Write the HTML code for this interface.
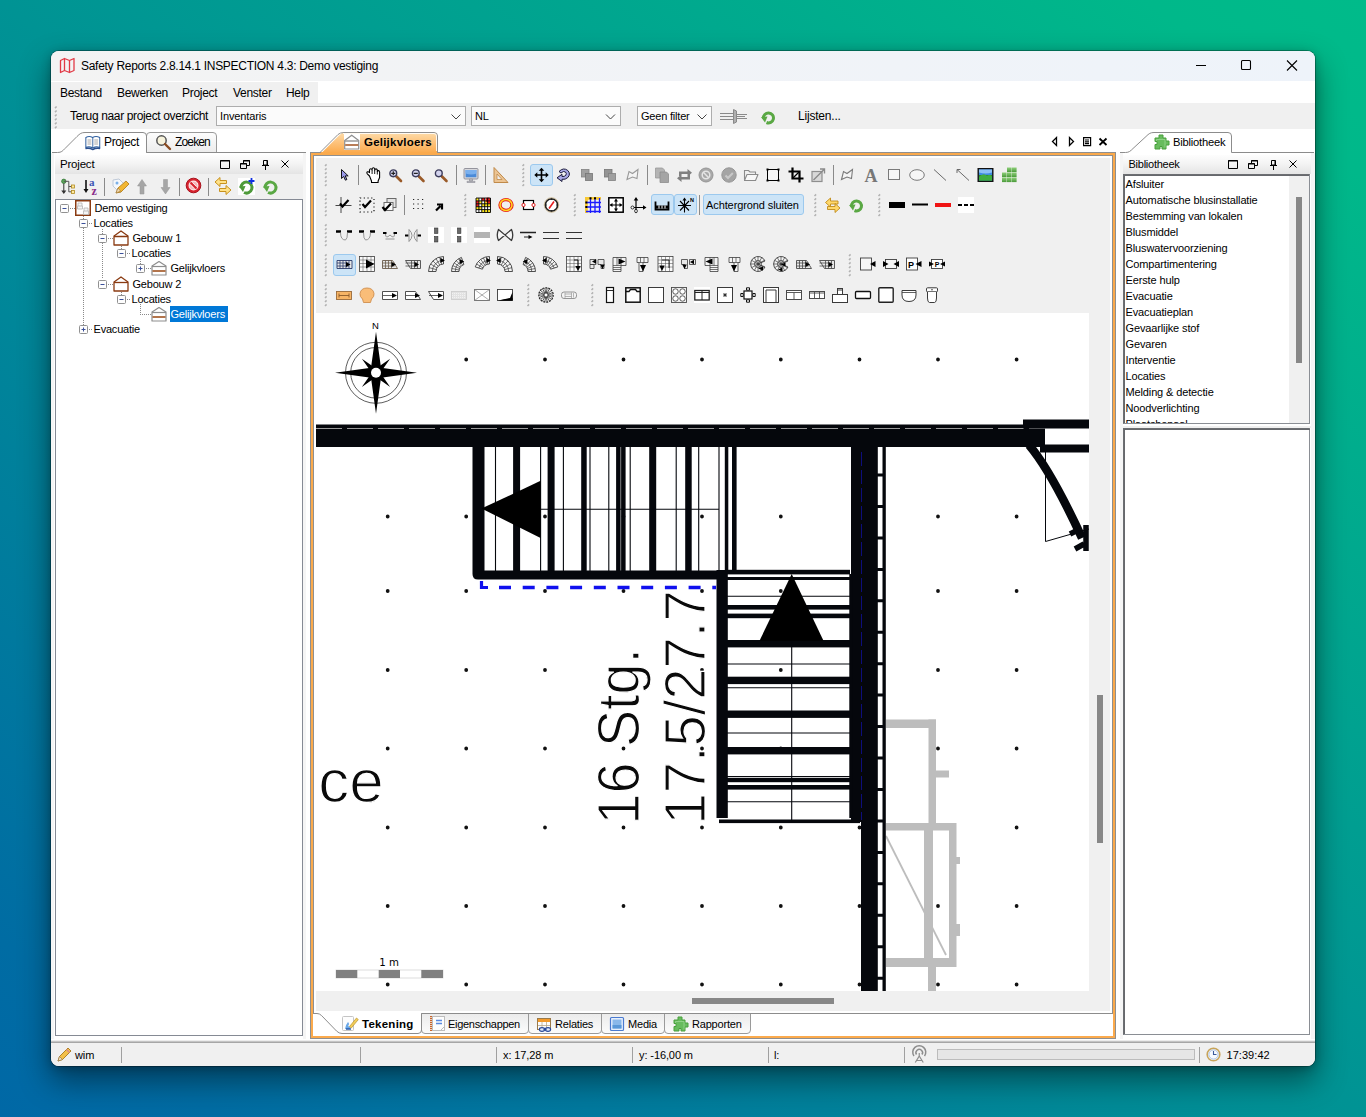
<!DOCTYPE html>
<html lang="nl">
<head>
<meta charset="utf-8">
<title>Safety Reports 2.8.14.1 INSPECTION 4.3: Demo vestiging</title>
<style>
*{box-sizing:border-box;margin:0;padding:0}
html,body{width:1366px;height:1117px;overflow:hidden}
body{position:relative;font-family:"Liberation Sans",sans-serif;font-size:11px;color:#000;
 background:linear-gradient(to top right,#0068a6 0%,#006ca3 8%,#009394 50%,#00b88a 92%,#00bb8a 100%);}
.abs,#win *{position:absolute}
#win{position:absolute;left:51px;top:51px;width:1264px;height:1015px;background:#fff;border-radius:8px;overflow:hidden;
 box-shadow:0 0 0 1px rgba(0,0,0,.28),0 14px 30px 2px rgba(0,0,0,.42),0 2px 10px rgba(0,0,0,.25);}
/* all coordinates inside #win are page coords minus 51 via wrapper */
#w{left:-51px;top:-51px;width:1366px;height:1117px}
.t{white-space:nowrap;line-height:14px;letter-spacing:-.13px}
.tr{letter-spacing:-.2px;line-height:15px}
.ui{font-size:12px;letter-spacing:-.3px;white-space:nowrap;line-height:16px}
#titlebar{left:51px;top:51px;width:1264px;height:30px;background:linear-gradient(to right,#f3f3f3,#f1f3f7 50%,#eef3fa)}
#menubar{left:51px;top:82px;width:267px;height:21px;background:#f0f0f0}
#toolbar{left:51px;top:103px;width:1264px;height:26px;background:#f0f0f0}
.combo{background:#fbfbfb;border:1px solid #adadad;height:20px;top:106px}
.combo .t{left:3px;top:2px}
.hdr{height:19px;background:linear-gradient(#fdfdfd,#f4f4f4 45%,#e4e4e4)}
.box{border:1px solid #858a94;background:#fff}
svg{overflow:visible}
</style>
</head>
<body>
<div id="win"><div id="w">

<!-- TITLE BAR -->
<div id="titlebar"></div>
<svg style="left:59px;top:57px" width="17" height="17" viewBox="0 0 17 17"><path d="M1.5 3.5 L5.5 1.5 L5.5 13.5 L1.5 15.5 Z M5.5 1.5 L10.5 3.5 L10.5 15.5 L5.5 13.5 M10.5 3.5 L15 1.5 L15 13.5 L10.5 15.5" fill="none" stroke="#e23a46" stroke-width="1.300" stroke-linejoin="round"/></svg>
<div class="ui" style="left:81px;top:58px;letter-spacing:-.28px">Safety Reports 2.8.14.1 INSPECTION 4.3: Demo vestiging</div>
<svg style="left:1190px;top:55px" width="120" height="22" viewBox="0 0 120 22" fill="none" stroke="#000" stroke-width="1.1"><path d="M6 10.5h10"/><rect x="51.500" y="5.500" width="9" height="9" rx="1"/><path d="M97 5.5l10 10M107 5.5l-10 10"/></svg>

<!-- MENU BAR -->
<div id="menubar"></div>
<div class="ui" style="left:60px;top:85px">Bestand</div>
<div class="ui" style="left:117px;top:85px">Bewerken</div>
<div class="ui" style="left:182px;top:85px">Project</div>
<div class="ui" style="left:233px;top:85px">Venster</div>
<div class="ui" style="left:286px;top:85px">Help</div>

<!-- MAIN TOOLBAR -->
<div id="toolbar"></div>
<svg style="left:50px;top:100px" width="12" height="32" viewBox="50 100 12 32"><path d="M55 108.1l1.600-1.600M55 112.1l1.600-1.600M55 116.1l1.600-1.600M55 120.1l1.600-1.600M55 124.1l1.600-1.600M55 128.1l1.600-1.600" stroke="#b2b2b2" stroke-width="1.500" fill="none"/></svg>
<div class="ui" style="left:70px;top:108px;letter-spacing:-.36px">Terug naar project overzicht</div>
<div class="combo" style="left:216px;width:250px"><div class="t">Inventaris</div></div>
<div class="combo" style="left:471px;width:150px"><div class="t">NL</div></div>
<div class="combo" style="left:637px;width:75px"><div class="t" style="letter-spacing:-.2px">Geen filter</div></div>
<svg style="left:0;top:100px" width="1366" height="32" viewBox="0 100 1366 32" fill="none">
<path d="M451.500 114.500l4.500 4.500l4.500-4.500M606 114.500l4.500 4.500l4.500-4.500M697.500 114.500l4.500 4.500l4.500-4.500" stroke="#444" stroke-width="1"/>
<g stroke="#8a8a8a" stroke-width="1"><path d="M720 113.500h13M720 116.500h13M720 119.500h13M737 114.500h10M737 116.500h8M737 118.500h10"/><path d="M733.500 109.500l3 1.500v11l-3 1.500z" fill="#b0b0b0"/></g>
<g transform="translate(760 109)"><path d="M3.500 9.500a5 5 0 1 1 3 4" fill="none" stroke="#5aa844" stroke-width="3"/><path d="M1 8l6.500-.5l-2.500 6z" fill="#5aa844"/></g>
</svg>
<div class="ui" style="left:798px;top:108px;letter-spacing:-.2px">Lijsten...</div>

<!-- LEFT PANEL -->
<div id="left">
<!-- tabs -->
<svg style="left:0;top:0" width="1366" height="200" viewBox="0 0 1366 200">
 <defs><linearGradient id="gtab" x1="0" y1="0" x2="0" y2="1"><stop offset="0" stop-color="#fdfdfd"/><stop offset="1" stop-color="#ececec"/></linearGradient></defs>
 <path d="M146.500 152.500V136q0-3.500 3.500-3.500H213q3.500 0 3.500 3.500V152.500Z" fill="url(#gtab)" stroke="#9a9a9a"/>
 <path d="M52 152.500H57.500C61.500 152.500 62.500 151 65 148.500L77 136.500C80 133.500 81.500 132.500 85 132.500H143q3.500 0 3.500 3.500V152.500H306" fill="none" stroke="#8c8c8c"/>
</svg>
<!-- book icon -->
<svg style="left:85px;top:135px" width="16" height="16" viewBox="0 0 19 16" preserveAspectRatio="none"><path d="M1 2.500Q5 .5 9 2.500Q13 .5 17.500 2.500V12.500Q13 11 9.500 13Q5 11 1 12.500Z" fill="#fff" stroke="#2f5f9f" stroke-width="1.200"/><path d="M9.250 2.500V13" stroke="#2f5f9f"/><path d="M3 5h4.500M3 7h4.500M3 9h4.500M11 5h4.500M11 7h4.500M11 9h4.500" stroke="#8a8a8a" stroke-width=".8"/><path d="M.5 13.500Q5 12.500 9.250 14.500Q13.500 12.500 18 13.500" fill="none" stroke="#2a4f8f" stroke-width="1.500"/></svg>
<div class="ui" style="left:104px;top:134px;letter-spacing:-.35px">Project</div>
<!-- magnifier -->
<svg style="left:155px;top:134px" width="17" height="17" viewBox="0 0 17 17"><circle cx="6.500" cy="6.500" r="4.700" fill="#f7f3dc" stroke="#555" stroke-width="1.500"/><path d="M10 10l5 5" stroke="#8a4a1f" stroke-width="2.400" stroke-linecap="round"/></svg>
<div class="ui" style="left:175px;top:134px;letter-spacing:-.85px">Zoeken</div>
<!-- header -->
<div class="hdr" style="left:55px;top:155px;width:248px"></div>
<div class="ui" style="left:60px;top:156px;font-size:11.500px;letter-spacing:-.2px">Project</div>
<svg style="left:215px;top:155px" width="80" height="18" viewBox="0 0 80 18" fill="none" stroke="#000" stroke-width="1"><path d="M5.500 5.500h9v8h-9zM5 6h10" /><path d="M25.500 8.500h6v5h-6zM28.500 8V5.500h6v5H32M28 6h7M25 9h7"/><path d="M48.500 5.500h4v4.500h-4zM47 10.500h7M50.500 10.500V15M52 5.500v5"/><path d="M66.500 5.500l7 7M73.500 5.500l-7 7"/></svg>
<!-- left toolbar -->
<div style="left:55px;top:174px;width:248px;height:25px;background:#f0f0f0"></div>
<svg style="left:55px;top:174px" width="248" height="25" viewBox="0 0 248 25">
 <!-- tree sort -->
 <circle cx="8.800" cy="7.300" r="2.200" fill="#5aa85a" stroke="#2f6f2f" stroke-width=".7"/><path d="M8.800 9.500v9.500" stroke="#333" stroke-width="1"/><path d="M6.300 16.500L8.800 20L11.300 16.500Z" fill="#333"/><path d="M8.800 7.300h5v10.500h3M13.800 12.500h3" fill="none" stroke="#555" stroke-width="1"/><rect x="16.500" y="11" width="3" height="3" fill="#ffe9a0" stroke="#b08a20" stroke-width=".8"/><rect x="16.500" y="16.500" width="3" height="3" fill="#ffe9a0" stroke="#b08a20" stroke-width=".8"/>
 <!-- az sort -->
 <path d="M31 6v11" stroke="#111" stroke-width="1.600"/><path d="M28.500 15L31 19L33.500 15Z" fill="#111"/><text x="34" y="12" font-size="11" font-weight="bold" fill="#3b55b5" font-family="Liberation Serif,serif">a</text><text x="36.500" y="20.500" font-size="12" font-weight="bold" fill="#8a2f8a" font-family="Liberation Serif,serif">z</text>
 <path d="M49.500 4v18" stroke="#8a8a8a"/>
 <!-- tag pencil -->
 <path d="M58 6l6-1l7 7l-6 7l-7-7z" fill="#f4f7fb" stroke="#b9c4d4" stroke-width=".9"/><circle cx="62" cy="9" r="1.500" fill="#7ab0e8"/><path d="M61 19l2-5l8-7l3 3l-8 8z" fill="#f2b632" stroke="#b07814" stroke-width=".8"/><path d="M61 19l2-5l2.500 3z" fill="#f6dcb0" stroke="#8a6a3a" stroke-width=".5"/>
 <!-- up/down arrows -->
 <path d="M87 5.500l4.500 6.500h-2.500v8h-4v-8h-2.500z" fill="#a6a6a6" stroke="#969696" stroke-width=".5"/>
 <path d="M110.500 20l4.500-6.500h-2.500v-8h-4v8h-2.500z" fill="#a6a6a6" stroke="#969696" stroke-width=".5"/>
 <path d="M124.500 4v18" stroke="#8a8a8a"/>
 <!-- stop sign -->
 <circle cx="138.500" cy="11.500" r="7.300" fill="#d8232f" stroke="#a8111c" stroke-width="1"/><circle cx="138.500" cy="11.500" r="4.400" fill="#f4b4b8" stroke="#fbe4e4" stroke-width="1.200"/><path d="M135.500 8.500l6 6" stroke="#d8232f" stroke-width="2"/><path d="M137.500 8.500l4 4M135 10.500l4 4" stroke="#fff" stroke-width=".7"/>
 <path d="M153.500 4v18" stroke="#8a8a8a"/>
 <!-- arrows -->
 <path d="M160 8l5-4.500v3h6.500v3H165v3z" fill="#ffe28a" stroke="#c8921e" stroke-width="1"/><path d="M176 16l-5-4.500v3h-6.500v3h6.500v3z" fill="#ffe28a" stroke="#c8921e" stroke-width="1"/>
 <!-- refresh plus -->
 <rect x="183" y="4" width="17" height="17" fill="#fff"/>
 <path d="M186 14a5.500 5.500 0 1 1 3 4.500" fill="none" stroke="#4e9a3a" stroke-width="3"/><path d="M184 12.500l6.500-.5l-2.500 6z" fill="#4e9a3a"/><path d="M196.500 4v6M193.500 7h6" stroke="#1030e0" stroke-width="1.800"/>
 <!-- refresh -->
 <path d="M210 14a5.500 5.500 0 1 1 3 4.500" fill="none" stroke="#5aa844" stroke-width="3"/><path d="M208 12.500l6.500-.5l-2.500 6z" fill="#5aa844"/>
</svg>
<!-- tree -->
<div class="box" style="left:55px;top:199px;width:248px;height:837px"></div>
<svg style="left:0;top:0" width="320" height="340" viewBox="0 0 320 340" fill="none"><rect x="60.5" y="204.5" width="8" height="8" rx="1" fill="#fdfdfd" stroke="#919191"/><path d="M62.5 208.5h4" stroke="#3a4f9a"/><path d="M70 208.5H75" stroke="#8a8a8a" stroke-dasharray="1 1"/><rect x="75.750" y="200.750" width="14.500" height="14.500" fill="#fff" stroke="#8a3b12" stroke-width="1.500"/><path d="M78 206v-3h4v3M77.500 206h5v3h-5zM84 211v-3h4v3M83.500 211h5v3.500h-5z" fill="#f4f4f4" stroke="#b5b5b5" stroke-width=".8"/><path d="M83.5 216V219" stroke="#8a8a8a" stroke-dasharray="1 1"/><rect x="79.5" y="219.5" width="8" height="8" rx="1" fill="#fdfdfd" stroke="#919191"/><path d="M81.5 223.5h4" stroke="#3a4f9a"/><path d="M89 223.5H93" stroke="#8a8a8a" stroke-dasharray="1 1"/><path d="M83.5 228V325" stroke="#8a8a8a" stroke-dasharray="1 1"/><path d="M102.5 229V234" stroke="#8a8a8a" stroke-dasharray="1 1"/><rect x="98.5" y="234.5" width="8" height="8" rx="1" fill="#fdfdfd" stroke="#919191"/><path d="M100.5 238.5h4" stroke="#3a4f9a"/><path d="M108 238.5H113" stroke="#8a8a8a" stroke-dasharray="1 1"/><path d="M114 236L121 231L128 236V245H114Z" fill="#fff" stroke="#8a3b12" stroke-width="1.300" stroke-linejoin="round"/><path d="M114 236.5H128" stroke="#8a3b12" stroke-width="1.300"/><path d="M102.5 243V279" stroke="#8a8a8a" stroke-dasharray="1 1"/><path d="M121.5 246V249" stroke="#8a8a8a" stroke-dasharray="1 1"/><rect x="117.5" y="249.5" width="8" height="8" rx="1" fill="#fdfdfd" stroke="#919191"/><path d="M119.5 253.5h4" stroke="#3a4f9a"/><path d="M127 253.5H131" stroke="#8a8a8a" stroke-dasharray="1 1"/><path d="M140.5 259V264" stroke="#8a8a8a" stroke-dasharray="1 1"/><rect x="136.5" y="264.5" width="8" height="8" rx="1" fill="#fdfdfd" stroke="#919191"/><path d="M138.5 268.5h4" stroke="#3a4f9a"/><path d="M140.5 266.5v4" stroke="#3a4f9a"/><path d="M146 268.5H151" stroke="#8a8a8a" stroke-dasharray="1 1"/><path d="M152 266L159 261.5L166 266V275H152Z" fill="#fff" stroke="#8e8e8e" stroke-width="1.200" stroke-linejoin="round"/><path d="M152 266.5H166" stroke="#8e8e8e" stroke-width="1.200"/><path d="M152.5 271H165.5" stroke="#a0521f" stroke-width="1.600"/><rect x="98.5" y="280.5" width="8" height="8" rx="1" fill="#fdfdfd" stroke="#919191"/><path d="M100.5 284.5h4" stroke="#3a4f9a"/><path d="M108 284.5H113" stroke="#8a8a8a" stroke-dasharray="1 1"/><path d="M114 282L121 277L128 282V291H114Z" fill="#fff" stroke="#8a3b12" stroke-width="1.300" stroke-linejoin="round"/><path d="M114 282.5H128" stroke="#8a3b12" stroke-width="1.300"/><path d="M121.5 292V295" stroke="#8a8a8a" stroke-dasharray="1 1"/><rect x="117.5" y="295.5" width="8" height="8" rx="1" fill="#fdfdfd" stroke="#919191"/><path d="M119.5 299.5h4" stroke="#3a4f9a"/><path d="M127 299.5H131" stroke="#8a8a8a" stroke-dasharray="1 1"/><path d="M140.5 304V314" stroke="#8a8a8a" stroke-dasharray="1 1"/><path d="M140 314.5H151" stroke="#8a8a8a" stroke-dasharray="1 1"/><path d="M152 312L159 307.5L166 312V321H152Z" fill="#fff" stroke="#8e8e8e" stroke-width="1.200" stroke-linejoin="round"/><path d="M152 312.5H166" stroke="#8e8e8e" stroke-width="1.200"/><path d="M152.5 317H165.5" stroke="#a0521f" stroke-width="1.600"/><rect x="79.5" y="325.5" width="8" height="8" rx="1" fill="#fdfdfd" stroke="#919191"/><path d="M81.5 329.5h4" stroke="#3a4f9a"/><path d="M83.5 327.5v4" stroke="#3a4f9a"/><path d="M89 329.5H93" stroke="#8a8a8a" stroke-dasharray="1 1"/></svg>
<div style="left:170px;top:306px;width:58px;height:16px;background:#0078d7"></div>
<div class="t tr" style="left:94.5px;top:200.5px">Demo vestiging</div>
<div class="t tr" style="left:93.5px;top:216.0px">Locaties</div>
<div class="t tr" style="left:132.5px;top:231.0px">Gebouw 1</div>
<div class="t tr" style="left:131.5px;top:246.0px">Locaties</div>
<div class="t tr" style="left:170.5px;top:261.0px">Gelijkvloers</div>
<div class="t tr" style="left:132.5px;top:276.5px">Gebouw 2</div>
<div class="t tr" style="left:131.5px;top:291.5px">Locaties</div>
<div class="t tr" style="left:170.5px;top:306.5px;color:#fff">Gelijkvloers</div>
<div class="t tr" style="left:93.5px;top:322.0px">Evacuatie</div>
</div>

<!-- CENTER PANEL -->
<div id="center">
<!-- top tab + nav -->
<svg style="left:0;top:0" width="1366" height="160" viewBox="0 0 1366 160">
 <defs><linearGradient id="gor" x1="0" y1="0" x2="0" y2="1"><stop offset="0" stop-color="#fddcaa"/><stop offset=".5" stop-color="#fdc27a"/><stop offset="1" stop-color="#fbaa4c"/></linearGradient></defs>
 <path d="M315 153L322 152.500L339 135.500Q341.500 132.500 345 132.500H434q3.500 0 3.500 3.500V153Z" fill="url(#gor)"/>
 <path d="M316 152.500H320L338 134.500Q340 132.500 344 132.500H434q3.500 0 3.500 3.500V152.500" fill="none" stroke="#8f8f8f"/>
 <path d="M343 133.500H434q2.500 0 2.500 2.500V151" fill="none" stroke="#fff" stroke-opacity=".85"/>
 <rect x="344" y="134" width="16" height="16" fill="#fff"/>
 <path d="M344.700 140.500L351.700 135.200L358.700 140.500V149H344.700Z" fill="#fff" stroke="#8e8e8e" stroke-width="1.200" stroke-linejoin="round"/><path d="M344.700 141H358.700" stroke="#9a9a9a" stroke-width="1.400"/><path d="M345.200 145H358.200" stroke="#a0521f" stroke-width="1.300"/>
 <g fill="none" stroke="#000" stroke-width="1.300"><path d="M1056.500 137.500v8l-4-4z"/><path d="M1069.500 137.500v8l4-4z"/><path d="M1083.600 137.600h7v8h-7zM1085 140h4M1085 141.800h4M1085 143.600h4" stroke-width="1.200"/><path d="M1099.500 138.500l7 6.500M1106.500 138.500l-7 6.500" stroke-width="1.800"/></g>
</svg>
<div class="t" style="left:364px;top:135px;font-weight:bold;font-size:11.500px;letter-spacing:.22px">Gelijkvloers</div>
<!-- frame -->
<div style="left:310px;top:152px;width:806px;height:887px;border:1px solid #8f8f8f;background:#fff"></div>
<div style="left:311px;top:153px;width:804px;height:885px;border:2px solid #fbaa4c"></div>
<div style="left:313px;top:155px;width:800px;height:859px;border:1px solid #8f8f8f;border-bottom:0"></div>
<div style="left:321px;top:152px;width:116px;height:1px;background:#fbaa4c"></div>
<!-- toolbar / scroll bg -->
<div id="ctb" style="left:316px;top:158px;width:794px;height:853px;background:#f0f0f0"></div>
<!--TB-->
<svg id="tbicons" style="left:0;top:0" width="1366" height="320" viewBox="0 0 1366 320" fill="none">
<path d="M325.0 166.0l1.600-1.600M325.0 170.0l1.600-1.600M325.0 174.0l1.600-1.600M325.0 178.0l1.600-1.600M325.0 182.0l1.600-1.600M325.0 186.0l1.600-1.600" stroke="#b2b2b2" stroke-width="1.500" fill="none"/>
<g transform="translate(336 167)"><path d="M5.500 2.500v9l2.200-2l1.700 3.700l1.500-.7l-1.700-3.600h3z" fill="#9a9aea" stroke="#000" stroke-width=".9"/></g>
<path d="M358.5 165V185" stroke="#8a8a8a"/>
<g transform="translate(365 167)"><path d="M4.500 9L2.300 6.800q-1-1.400.2-2q1-.4 2 .8V3q.2-1.300 1.300-1.300T7.100 3V2q.2-1.200 1.300-1.200T9.700 2v1q.3-1.100 1.300-1.100T12.300 3v1.500q.3-1 1.200-.9T14.600 5v5.500l-1.500 3.500v1.500H6.500v-1.500z" fill="#fff" stroke="#000" stroke-width="1.100" stroke-linejoin="round"/><path d="M7.100 3v4M9.700 3v4M12.300 4.500v3" stroke="#000" stroke-width=".9"/></g>
<g transform="translate(388 167)"><path d="M8.500 9.500l4.500 4.500" stroke="#9a5a28" stroke-width="2.600" stroke-linecap="round"/><circle cx="5.300" cy="6.300" r="3.400" fill="#d4d4ee" stroke="#3a3a5a" stroke-width="1.400"/><path d="M3.300 6.300h4M5.300 4.300v4" stroke="#222" stroke-width="1.200"/></g>
<g transform="translate(410.5 167)"><path d="M8.500 9.500l4.500 4.500" stroke="#9a5a28" stroke-width="2.600" stroke-linecap="round"/><circle cx="5.300" cy="6.300" r="3.400" fill="#d4d4ee" stroke="#3a3a5a" stroke-width="1.400"/><path d="M3.300 6.300h4" stroke="#222" stroke-width="1.200"/></g>
<g transform="translate(433.5 167)"><path d="M8.500 9.500l4.500 4.500" stroke="#9a5a28" stroke-width="2.600" stroke-linecap="round"/><circle cx="5.300" cy="6.300" r="3.400" fill="#d4d4ee" stroke="#3a3a5a" stroke-width="1.400"/></g>
<path d="M456.5 165V185" stroke="#8a8a8a"/>
<g transform="translate(463 167)"><rect x="1" y="1.500" width="14" height="10.500" rx="1" fill="#d8d8dc" stroke="#8a8a94" stroke-width=".9"/><rect x="2.600" y="3" width="10.800" height="7.300" fill="#4a8ad8"/><path d="M2.600 3h10.800v3.500q-5 2-10.800 0z" fill="#7ab0ee"/><path d="M6.500 12h3v2h-3zM4 14.300h8v1.200H4z" fill="#c4c4c8" stroke="#8a8a94" stroke-width=".6"/></g>
<path d="M485.5 165V185" stroke="#8a8a8a"/>
<g transform="translate(492.5 167)"><path d="M1.500 .5L15.500 15.500H1.500Z" fill="#ecc493" stroke="#c08a4a" stroke-width="1"/><path d="M4.500 7L9.500 12.500H4.500Z" fill="#f0f0f0" stroke="#c08a4a" stroke-width=".8"/></g>
<path d="M522.5 166.0l1.600-1.600M522.5 170.0l1.600-1.600M522.5 174.0l1.600-1.600M522.5 178.0l1.600-1.600M522.5 182.0l1.600-1.600M522.5 186.0l1.600-1.600" stroke="#b2b2b2" stroke-width="1.500" fill="none"/>
<rect x="530.5" y="164.5" width="22" height="21" rx="2.500" fill="#cce4f7" stroke="#9cc9ee"/>
<g transform="translate(533.5 167)"><path d="M8 .8L10.800 3.800H8.800V7.200H12.200V5.200L15.200 8L12.200 10.800V8.800H8.800V12.200H10.800L8 15.200L5.200 12.200H7.200V8.800H3.800V10.800L.8 8L3.800 5.200V7.200H7.200V3.800H5.200Z" fill="#000"/></g>
<g transform="translate(555.5 167)"><path d="M3.500 4.500Q8 0 12.300 3.500Q15.500 7 12.300 10.500Q10 12.800 6.500 12.300V14.500L1.500 10.800L6.500 7.300V9.500Q9 9.800 10.300 8.300Q11.500 6.500 10 5Q8 3.500 5.500 6Z" fill="#a9a9e8" stroke="#1a1a3a" stroke-width="1"/></g>
<g transform="translate(579 167)"><rect x="2.500" y="2.500" width="7.500" height="7.500" fill="#a0a0a0" stroke="#828282" stroke-width=".8"/><rect x="6.500" y="6.500" width="7" height="7" fill="#949494" stroke="#767676" stroke-width=".8"/></g>
<g transform="translate(602 167)"><rect x="2.500" y="2.500" width="7.500" height="7.500" fill="#949494" stroke="#767676" stroke-width=".8"/><rect x="6.500" y="6.500" width="7" height="7" fill="#a0a0a0" stroke="#828282" stroke-width=".8"/></g>
<g transform="translate(624.5 167)"><path d="M2.500 12.500L4.500 4.500L8 6.500L13.500 2.500L12.500 11.500L8 10Z" fill="#f4f4f4" stroke="#9a9a9a" stroke-width="1.100"/></g>
<path d="M647.5 165V185" stroke="#8a8a8a"/>
<g transform="translate(654 167)"><path d="M1.500 1h7l2 2v8h-9z" fill="#b4b4b4" stroke="#9a9a9a" stroke-width=".8"/><path d="M6 5h6.500l2 2v8.500H6z" fill="#a4a4a4" stroke="#8e8e8e" stroke-width=".8"/></g>
<g transform="translate(676.5 167)"><path d="M2.500 9V4.500h8.500V2l4.500 3.700L11 9.500V7H5v2zM13.500 7.500v5H5v2.500L.5 11.300L5 7.500V10h6V7.500z" fill="#808080"/></g>
<g transform="translate(698 167)"><circle cx="8" cy="8" r="7" fill="#a8a8a8" stroke="#969696"/><circle cx="8" cy="8" r="3.800" fill="none" stroke="#e4e4e4" stroke-width="1.500"/><path d="M5.300 5.300l5.400 5.400" stroke="#e4e4e4" stroke-width="1.500"/></g>
<g transform="translate(721 167)"><circle cx="8" cy="8" r="7.200" fill="#a4a4a4" stroke="#969696"/><path d="M4.500 8.500l2.500 2.500l4.800-5" fill="none" stroke="#c8c8c8" stroke-width="2"/></g>
<g transform="translate(743 167)"><path d="M1.500 13.500V3.500h4l1.500 1.500h5.500v2.500" fill="none" stroke="#8a8a8a" stroke-width="1.100"/><path d="M1.500 13.500L4 7.500h11l-2.500 6z" fill="#f8f8f8" stroke="#8a8a8a" stroke-width="1.100" stroke-linejoin="round"/></g>
<g transform="translate(765 167)"><rect x="2.500" y="2.500" width="11" height="11" fill="#f6f6f6" stroke="#000" stroke-width="1"/><path d="M1.500 1.500h2v2h-2zM12.500 1.500h2v2h-2zM1.500 12.500h2v2h-2zM12.500 12.500h2v2h-2z" fill="#000"/></g>
<g transform="translate(788 167)"><path d="M4.500 .5V11.500H15.500M.5 4.500H11.500V15.500" fill="none" stroke="#000" stroke-width="2.200"/><path d="M4.500 11.500L11.500 4.500" stroke="#000" stroke-width="1.200"/></g>
<g transform="translate(810.5 167)"><rect x="1.500" y="4.500" width="10" height="10" fill="#d8d8d8" stroke="#8e8e8e" stroke-width="1.200"/><path d="M3 13L13.500 2.500M9.500 2h4.500v4.500" fill="none" stroke="#8a8a8a" stroke-width="1.400"/></g>
<path d="M833.5 165V185" stroke="#8a8a8a"/>
<g transform="translate(839 167)"><path d="M2.500 12.500L4.500 4.500L8 6.500L13.500 2.500L12.500 11.500L8 10Z" fill="#f4f4f4" stroke="#7a7a7a" stroke-width="1.100"/></g>
<text x="871" y="181.5" font-family="Liberation Serif,serif" font-weight="bold" font-size="18" text-anchor="middle" fill="#777">A</text>
<g transform="translate(886 167)"><rect x="2.500" y="2.500" width="11" height="10" fill="#f6f6f6" stroke="#7a7a7a" stroke-width="1"/></g>
<g transform="translate(909 167)"><ellipse cx="8" cy="8" rx="7.300" ry="5.300" fill="#f6f6f6" stroke="#7a7a7a" stroke-width="1"/></g>
<g transform="translate(932 167)"><path d="M2 2.500L14 13.500" stroke="#6a6a6a" stroke-width="1"/></g>
<g transform="translate(955 167)"><path d="M2 2.500L14 13.500M2 6V2.500H5.500" fill="none" stroke="#6a6a6a" stroke-width="1"/></g>
<g transform="translate(977.5 167)"><rect x=".7" y="1.700" width="14.600" height="12.600" fill="#3f8be0" stroke="#111" stroke-width="1.400"/><path d="M1.500 8h13v5.500h-13z" fill="#2f8a2f"/><path d="M1.500 10Q6 5 9.500 9Q12 7 14.500 9.500V13.500H1.500Z" fill="#3fae3f"/><path d="M1.500 2.500h13v3q-6 2-13 0z" fill="#8cc0f4"/></g>
<defs><linearGradient id="ggr" x1="0" y1="0" x2="0" y2="1"><stop offset="0" stop-color="#8fd07a"/><stop offset="1" stop-color="#4a9a3a"/></linearGradient></defs><g transform="translate(1001.5 167)"><rect x="5.5" y="0.5" width="4.600" height="4.600" fill="url(#ggr)"/><rect x="10.5" y="0.5" width="4.600" height="4.600" fill="url(#ggr)"/><rect x="0.5" y="5.5" width="4.600" height="4.600" fill="url(#ggr)"/><rect x="5.5" y="5.5" width="4.600" height="4.600" fill="url(#ggr)"/><rect x="10.5" y="5.5" width="4.600" height="4.600" fill="url(#ggr)"/><rect x="0.5" y="10.5" width="4.600" height="4.600" fill="url(#ggr)"/><rect x="5.5" y="10.5" width="4.600" height="4.600" fill="url(#ggr)"/><rect x="10.5" y="10.5" width="4.600" height="4.600" fill="url(#ggr)"/></g>
<path d="M325.0 196.0l1.600-1.600M325.0 200.0l1.600-1.600M325.0 204.0l1.600-1.600M325.0 208.0l1.600-1.600M325.0 212.0l1.600-1.600M325.0 216.0l1.600-1.600" stroke="#b2b2b2" stroke-width="1.500" fill="none"/>
<g transform="translate(335.5 197)"><path d="M5.500 0V16M0 8.500H16" stroke="#333" stroke-width=".9"/><path d="M4.500 6.500l2.500 3l6-6.500" fill="none" stroke="#000" stroke-width="2.200"/></g>
<g transform="translate(359 197)"><rect x="1" y="1" width="14" height="14" fill="none" stroke="#111" stroke-width="1.200" stroke-dasharray="1.200 2.530"/><path d="M3.500 7l2.500 3l6-6.500" fill="none" stroke="#000" stroke-width="2.200"/></g>
<g transform="translate(381.5 197)"><rect x="5.500" y="1.500" width="9" height="9" fill="#e4e4e4" stroke="#6a6a6a"/><rect x="2.500" y="5.500" width="9" height="8" fill="#fafafa" stroke="#6a6a6a"/><path d="M1 10l2.500 3l6-6.500" fill="none" stroke="#000" stroke-width="2.200"/></g>
<path d="M404.5 195V215" stroke="#8a8a8a"/>
<g transform="translate(410.5 197)"><path d="M2.500 2.500H14M2.500 7H14M2.500 11.500H14" stroke="#222" stroke-width="1.200" stroke-dasharray="1.200 3.300"/></g>
<g transform="translate(430.5 197)"><path d="M5.500 13.500L10 9M6.500 7.500H11.500V12.500" fill="none" stroke="#000" stroke-width="2.200"/></g>
<path d="M464.5 196.0l1.600-1.600M464.5 200.0l1.600-1.600M464.5 204.0l1.600-1.600M464.5 208.0l1.600-1.600M464.5 212.0l1.600-1.600M464.5 216.0l1.600-1.600" stroke="#b2b2b2" stroke-width="1.500" fill="none"/>
<g transform="translate(475 197)"><rect x="0" y="0" width="16" height="16" fill="#fff"/><rect x="1.0" y="1.0" width="2.900" height="2.900" fill="#ffe81e"/><rect x="1.0" y="3.9" width="2.900" height="2.900" fill="#ee1e1e"/><rect x="1.0" y="6.8" width="2.900" height="2.900" fill="#ee1e1e"/><rect x="1.0" y="9.7" width="2.900" height="2.900" fill="#ffe81e"/><rect x="1.0" y="12.6" width="2.900" height="2.900" fill="#fff"/><rect x="3.9" y="1.0" width="2.900" height="2.900" fill="#fff"/><rect x="3.9" y="3.9" width="2.900" height="2.900" fill="#ffe81e"/><rect x="3.9" y="6.8" width="2.900" height="2.900" fill="#fff"/><rect x="3.9" y="9.7" width="2.900" height="2.900" fill="#ffe81e"/><rect x="3.9" y="12.6" width="2.900" height="2.900" fill="#fff"/><rect x="6.8" y="1.0" width="2.900" height="2.900" fill="#ee1e1e"/><rect x="6.8" y="3.9" width="2.900" height="2.900" fill="#fff"/><rect x="6.8" y="6.8" width="2.900" height="2.900" fill="#ffe81e"/><rect x="6.8" y="9.7" width="2.900" height="2.900" fill="#fff"/><rect x="6.8" y="12.6" width="2.900" height="2.900" fill="#ffe81e"/><rect x="9.7" y="1.0" width="2.900" height="2.900" fill="#fff"/><rect x="9.7" y="3.9" width="2.900" height="2.900" fill="#ffe81e"/><rect x="9.7" y="6.8" width="2.900" height="2.900" fill="#ffe81e"/><rect x="9.7" y="9.7" width="2.900" height="2.900" fill="#fff"/><rect x="9.7" y="12.6" width="2.900" height="2.900" fill="#ffe81e"/><rect x="12.6" y="1.0" width="2.900" height="2.900" fill="#fff"/><rect x="12.6" y="3.9" width="2.900" height="2.900" fill="#ee1e1e"/><rect x="12.6" y="6.8" width="2.900" height="2.900" fill="#ffe81e"/><rect x="12.6" y="9.7" width="2.900" height="2.900" fill="#fff"/><rect x="12.6" y="12.6" width="2.900" height="2.900" fill="#ffe81e"/><circle cx="13" cy="3" r="2.500" fill="#ee1e1e"/><path d="M1 1.0h14.500M1.0 1v14.500M1 3.9h14.500M3.9 1v14.500M1 6.8h14.500M6.8 1v14.500M1 9.7h14.500M9.7 1v14.500M1 12.6h14.500M12.6 1v14.500M1 15.5h14.500M15.5 1v14.500" stroke="#000" stroke-width=".9"/></g>
<g transform="translate(498 197)"><ellipse cx="8" cy="8" rx="6" ry="5.400" fill="none" stroke="#e61e1e" stroke-width="3.400"/><ellipse cx="8" cy="8" rx="6" ry="5.400" fill="none" stroke="#ffd81e" stroke-width="1.500"/></g>
<g transform="translate(520.5 197)"><rect x="3" y="3.500" width="10" height="9" fill="#fff" stroke="#000" stroke-width="1.200"/><circle cx="3" cy="8" r="1.600" fill="#fff" stroke="#e61e1e"/><circle cx="13" cy="8" r="1.600" fill="#fff" stroke="#e61e1e"/></g>
<g transform="translate(543.5 197)"><circle cx="8" cy="8" r="6.200" fill="#fff" stroke="#222" stroke-width="1.600"/><path d="M8 .5l1.500 2.500h-3zM8 15.500l1.500-2.500h-3zM.5 8l2.500-1.500v3zM15.500 8l-2.500-1.500v3z" fill="#222"/><path d="M5.500 11.500l5-7" stroke="#e61e1e" stroke-width="1.600"/><circle cx="8" cy="8" r="7.300" fill="none" stroke="#c8b48a" stroke-width=".8"/></g>
<path d="M574.0 196.0l1.600-1.600M574.0 200.0l1.600-1.600M574.0 204.0l1.600-1.600M574.0 208.0l1.600-1.600M574.0 212.0l1.600-1.600M574.0 216.0l1.600-1.600" stroke="#b2b2b2" stroke-width="1.500" fill="none"/>
<g transform="translate(585 197)"><path d="M0 0h16v2.800H2.800V16H0z" fill="#f7c832"/><path d="M1 5.500h15M1 10h15M1 14.500h15M5.500 1v15M10 1v15M14.500 1v15" stroke="#1a1aff" stroke-width="1.300"/><path d="M4.500 .3h2v2h-2zM9 .3h2v2H9zM.3 4.500h2v2h-2zM.3 9h2v2h-2z" fill="#000"/></g>
<g transform="translate(608 197)"><rect x=".8" y=".8" width="14.400" height="14.400" fill="#fff" stroke="#000" stroke-width="1.500"/><path d="M8 2.500v11M2.500 8h11" stroke="#000" stroke-width="1.200"/><path d="M8 1.500l2 3h-4zM8 14.500l2-3h-4zM1.500 8l3-2v4zM14.500 8l-3-2v4z" fill="#000"/></g>
<g transform="translate(630.5 197)"><path d="M5.500 2v11M3 10.500h12" stroke="#000" stroke-width="1.200"/><path d="M5.500 0l2.300 3.500h-4.600zM16 10.500l-3.500-2.300v4.600z" fill="#000"/><circle cx="2" cy="10.500" r="1.500" fill="#fff" stroke="#000" stroke-width=".8"/><ellipse cx="5.500" cy="14" rx="1.300" ry="1.800" fill="#fff" stroke="#000" stroke-width=".8"/></g>
<rect x="651.5" y="194.5" width="22" height="20" rx="2.500" fill="#cce4f7" stroke="#9cc9ee"/>
<rect x="674.5" y="194.5" width="22" height="20" rx="2.500" fill="#cce4f7" stroke="#9cc9ee"/>
<g transform="translate(654 197)"><path d="M1.500 4.500V12.500H14.500V4.500" fill="none" stroke="#000" stroke-width="1.800"/><path d="M1.500 10H14.500" stroke="#000" stroke-width="3"/><path d="M5 8.500v3M8 8.500v3M11 8.500v3" stroke="#fff" stroke-width="1"/></g>
<g transform="translate(677 197)"><path d="M7.500 2v13.500M1 8.500h13M3 4l9 9.500M12 4l-9 9.500" stroke="#000" stroke-width="1.100"/><path d="M7.500 .5l2 3h-4z" fill="#000"/></g>
<text x="692" y="201.5" font-size="5.500" font-weight="bold" text-anchor="middle" fill="#000">N</text>
<path d="M699.5 195V215" stroke="#8a8a8a"/>
<rect x="703.500" y="194.500" width="100" height="20" rx="2.500" fill="#cce4f7" stroke="#9cc9ee"/>
<path d="M814.5 196.0l1.600-1.600M814.5 200.0l1.600-1.600M814.5 204.0l1.600-1.600M814.5 208.0l1.600-1.600M814.5 212.0l1.600-1.600M814.5 216.0l1.600-1.600" stroke="#b2b2b2" stroke-width="1.500" fill="none"/>
<g transform="translate(824.5 197)"><path d="M1 5.500l5-4.500v3h7.500v3H6v3z" fill="#ffd86a" stroke="#c08a1a" stroke-width=".9"/><path d="M15.500 11l-5-4.500v3H3v3h7.500v3z" fill="#ffd86a" stroke="#c08a1a" stroke-width=".9"/></g>
<g transform="translate(848 197)"><path d="M3.500 9.500a5 5 0 1 1 3 4" fill="none" stroke="#5aa844" stroke-width="3"/><path d="M1 8l6.500-.5l-2.500 6z" fill="#5aa844"/></g>
<path d="M878.5 196.0l1.600-1.600M878.5 200.0l1.600-1.600M878.5 204.0l1.600-1.600M878.5 208.0l1.600-1.600M878.5 212.0l1.600-1.600M878.5 216.0l1.600-1.600" stroke="#b2b2b2" stroke-width="1.500" fill="none"/>
<rect x="889" y="202" width="16" height="6" fill="#000"/><rect x="912" y="203.500" width="16" height="2" fill="#000"/><rect x="935" y="203" width="16" height="4" fill="#f01414"/><rect x="958" y="197" width="16" height="16" fill="#fff"/><path d="M958 205H974" stroke="#000" stroke-width="2" stroke-dasharray="4 2"/>
<path d="M325.0 226.0l1.600-1.600M325.0 230.0l1.600-1.600M325.0 234.0l1.600-1.600M325.0 238.0l1.600-1.600M325.0 242.0l1.600-1.600M325.0 246.0l1.600-1.600" stroke="#b2b2b2" stroke-width="1.500" fill="none"/>
<g transform="translate(336 227)"><path d="M0 4.500h5M11 4.500h5" stroke="#000" stroke-width="2.400"/><path d="M4.500 5.500Q4.500 13 9.500 13Q11.500 12 11.500 5.500" fill="none" stroke="#8a8a8a" stroke-width=".9"/></g>
<g transform="translate(359 227)"><g transform="translate(16 0) scale(-1 1)"><path d="M0 4.500h5M11 4.500h5" stroke="#000" stroke-width="2.400"/><path d="M4.500 5.500Q4.500 13 9.500 13Q11.500 12 11.500 5.500" fill="none" stroke="#8a8a8a" stroke-width=".9"/></g></g>
<g transform="translate(382 227)"><path d="M1 6h3.500M11.500 6h3.500" stroke="#000" stroke-width="2.200"/><path d="M3.500 7Q3.500 12.500 8 8Q12.500 12.500 12.500 7M3.500 12h9" fill="none" stroke="#8a8a8a" stroke-width=".9"/></g>
<g transform="translate(405 227)"><path d="M0 8.500h3.500M12.500 8.500H16" stroke="#000" stroke-width="2.200"/><path d="M4 2.500Q10 8.500 4 14.500M12 2.500Q6 8.500 12 14.500M4 2.500v12M12 2.500v12" fill="none" stroke="#8a8a8a" stroke-width=".9"/></g>
<g transform="translate(428 227)"><rect width="16" height="16" fill="#fff"/><rect x="6.500" y="1" width="3.400" height="5.500" fill="#6a6a6a" stroke="#333" stroke-width=".6"/><rect x="6.500" y="9.500" width="3.400" height="5.500" fill="#6a6a6a" stroke="#333" stroke-width=".6"/></g>
<g transform="translate(451 227)"><rect width="16" height="16" fill="#fff"/><rect x="6.500" y="1" width="3.400" height="5.500" fill="#6a6a6a" stroke="#333" stroke-width=".6"/><rect x="6.500" y="9.500" width="3.400" height="5.500" fill="#6a6a6a" stroke="#333" stroke-width=".6"/></g>
<g transform="translate(474 227)"><rect width="16" height="16" fill="#fff"/><rect x="0" y="5" width="16" height="6" fill="#b4b4b4"/></g>
<g transform="translate(497 227)"><path d="M1.500 2.500Q-1 8 1.500 13.500L14.500 2.500Q17 8 14.500 13.500Z" fill="#f6f6f6" stroke="#3a3a3a" stroke-width="1.300" stroke-linejoin="round"/></g>
<g transform="translate(520 227)"><path d="M0 5.500H16" stroke="#222" stroke-width="1.600"/><path d="M4 10H9" stroke="#222" stroke-width="1"/><path d="M12.500 10L8.500 8v4z" fill="#000"/></g>
<g transform="translate(543 227)"><path d="M0 5.500H16M0 11.500H16" stroke="#333" stroke-width="1"/></g>
<g transform="translate(566 227)"><path d="M0 5.500H16M0 11.500H16" stroke="#333" stroke-width="1"/></g>
<path d="M325.0 256.0l1.600-1.600M325.0 260.0l1.600-1.600M325.0 264.0l1.600-1.600M325.0 268.0l1.600-1.600M325.0 272.0l1.600-1.600M325.0 276.0l1.600-1.600" stroke="#b2b2b2" stroke-width="1.500" fill="none"/>
<rect x="333.5" y="254.5" width="22" height="21" rx="2.500" fill="#cce4f7" stroke="#9cc9ee"/>
<g transform="translate(336.5 256)"><path d="M.5 4.500h15v8h-15z" fill="#e8e8e8" stroke="#2a3a6a" stroke-width=".9"/><path d="M3.5 4.500v8M6.5 4.500v8M9.5 4.500v8M12.5 4.500v8M.5 7h12M.5 10h12" stroke="#2a3a6a" stroke-width=".8" fill="none"/><path d="M14 8.500L9.500 6v5z" fill="#000"/></g>
<g transform="translate(359 256)"><rect x=".5" y=".5" width="15" height="15" fill="#fafafa" stroke="#3c3c3c" stroke-width=".8"/><path d="M.5 4h15M.5 7.500h15M.5 11h15M4 .5v15M8 .5v15M12 .5v15" stroke="#555" stroke-width=".55"/><path d="M15.500 8L7 3.500v9z" fill="#000"/></g>
<g transform="translate(382 256)"><path d="M.5 4.500h10l5 8h-15z" fill="#e8e8e8" stroke="#6a5a4a" stroke-width=".9"/><path d="M3.5 4.500v8M6.5 4.500v8M9.5 4.500v8M.5 7h12M.5 10h12" stroke="#6a5a4a" stroke-width=".8" fill="none"/><path d="M14 8.500L9.500 6v5z" fill="#000"/></g>
<g transform="translate(405 256)"><path d="M.5 4.500h15v8h-10z" fill="#e8e8e8" stroke="#4a4a4a" stroke-width=".9"/><path d="M6.5 4.500v8M9.5 4.500v8M12.5 4.500v8M.5 7h12M.5 10h12" stroke="#4a4a4a" stroke-width=".8" fill="none"/><path d="M14 8.500L9.500 6v5z" fill="#000"/></g>
<g transform="translate(428 256)"><path d="M8.0 15.5A7.5 7.5 0 0 1 15.5 8.0L15.5 0.5A15 15 0 0 0 0.5 15.5Z" fill="#f4f4f4" stroke="#3c3c3c" stroke-width=".9"/><path d="M4.3 15.5A11.2 11.2 0 0 1 15.5 4.3M8.3 13.6L1.0 11.6M9.0 11.8L2.5 8.0M10.2 10.2L4.9 4.9M11.7 9.0L8.0 2.5M13.6 8.3L11.6 1.0" fill="none" stroke="#3c3c3c" stroke-width=".7"/><path d="M16.9 4.4l-4.500-2.700v5.400z" fill="#000"/></g>
<g transform="translate(451 256)"><path d="M8.0 15.5A7.5 7.5 0 0 1 12.9 8.5L10.4 1.4A15 15 0 0 0 0.5 15.5Z" fill="#f4f4f4" stroke="#3c3c3c" stroke-width=".9"/><path d="M4.3 15.5A11.2 11.2 0 0 1 11.7 5.0M8.2 14.0L0.8 12.5M8.6 12.5L1.7 9.6M9.4 11.2L3.2 6.9M10.4 10.0L5.2 4.6M11.6 9.1L7.6 2.7" fill="none" stroke="#3c3c3c" stroke-width=".7"/><path d="M13.2 5.6l-4.500-2.700v5.400z" fill="#000"/></g>
<g transform="translate(474 256)"><path d="M8.4 13.2A7.5 7.5 0 0 1 15.5 8.0L15.5 0.5A15 15 0 0 0 1.2 10.9Z" fill="#f4f4f4" stroke="#3c3c3c" stroke-width=".9"/><path d="M4.8 12.0A11.2 11.2 0 0 1 15.5 4.3M9.0 11.8L2.5 8.0M9.9 10.5L4.4 5.5M11.1 9.4L6.7 3.4M12.4 8.6L9.4 1.8M13.9 8.2L12.4 0.8" fill="none" stroke="#3c3c3c" stroke-width=".7"/><path d="M16.9 4.4l-4.500-2.700v5.400z" fill="#000"/></g>
<g transform="translate(497 256)"><g transform="translate(16 0) scale(-1 1) "><path d="M8.0 15.5A7.5 7.5 0 0 1 15.5 8.0L15.5 0.5A15 15 0 0 0 0.5 15.5Z" fill="#f4f4f4" stroke="#3c3c3c" stroke-width=".9"/><path d="M4.3 15.5A11.2 11.2 0 0 1 15.5 4.3M8.3 13.6L1.0 11.6M9.0 11.8L2.5 8.0M10.2 10.2L4.9 4.9M11.7 9.0L8.0 2.5M13.6 8.3L11.6 1.0" fill="none" stroke="#3c3c3c" stroke-width=".7"/><path d="M16.9 4.4l-4.500-2.700v5.400z" fill="#000"/></g></g>
<g transform="translate(520 256)"><g transform="translate(16 0) scale(-1 1) "><path d="M8.0 15.5A7.5 7.5 0 0 1 12.9 8.5L10.4 1.4A15 15 0 0 0 0.5 15.5Z" fill="#f4f4f4" stroke="#3c3c3c" stroke-width=".9"/><path d="M4.3 15.5A11.2 11.2 0 0 1 11.7 5.0M8.2 14.0L0.8 12.5M8.6 12.5L1.7 9.6M9.4 11.2L3.2 6.9M10.4 10.0L5.2 4.6M11.6 9.1L7.6 2.7" fill="none" stroke="#3c3c3c" stroke-width=".7"/><path d="M13.2 5.6l-4.500-2.700v5.400z" fill="#000"/></g></g>
<g transform="translate(543 256)"><g transform="translate(16 0) scale(-1 1) "><path d="M8.4 13.2A7.5 7.5 0 0 1 15.5 8.0L15.5 0.5A15 15 0 0 0 1.2 10.9Z" fill="#f4f4f4" stroke="#3c3c3c" stroke-width=".9"/><path d="M4.8 12.0A11.2 11.2 0 0 1 15.5 4.3M9.0 11.8L2.5 8.0M9.9 10.5L4.4 5.5M11.1 9.4L6.7 3.4M12.4 8.6L9.4 1.8M13.9 8.2L12.4 0.8" fill="none" stroke="#3c3c3c" stroke-width=".7"/><path d="M16.9 4.4l-4.500-2.700v5.400z" fill="#000"/></g></g>
<g transform="translate(566 256)"><rect x=".5" y=".5" width="15" height="15" fill="#fafafa" stroke="#3c3c3c" stroke-width=".8"/><path d="M.5 4h15M.5 7.500h15M.5 11h15M4 .5v15M8 .5v15M12 .5v15" stroke="#555" stroke-width=".55"/><path d="M12 15l-2.700-5h5.400z" fill="#000"/><path d="M8 4h4v7" fill="none" stroke="#000" stroke-width=".9"/></g>
<g transform="translate(589 256)"><path d="M1 3.500h6v5H1zM1 8.500h4v4H1zM9 3.500h6v9h-3v-4H9z" fill="#e8e8e8" stroke="#3c3c3c" stroke-width=".8"/><path d="M3 5.500l4-2.300v4.600zM13.500 13l-2.300-4.500h4.600z" fill="#000"/></g>
<g transform="translate(611.5 256)"><path d="M1.500 1.500h13v8h-5v6h-8z" fill="#f4f4f4" stroke="#3c3c3c" stroke-width=".8"/><path d="M1.500 9.500h8M1.500 11.500h8M1.500 13.500h8M5.500 1.500v8M9.500 1.500v8" stroke="#3c3c3c" stroke-width=".7"/><path d="M14 5.500L7 2.500v6z" fill="#000"/></g>
<g transform="translate(634.5 256)"><path d="M2.500 1.500h11v5h-5v9h-4v-9h-2z" fill="#f4f4f4" stroke="#3c3c3c" stroke-width=".8"/><path d="M4.500 6.500h4M6 1.500v5M9.500 1.500v5" stroke="#3c3c3c" stroke-width=".7"/><path d="M8.500 15.500l-3-6.500h6z" fill="#000"/></g>
<g transform="translate(657.5 256)"><rect x=".5" y=".5" width="15" height="15" fill="#fafafa" stroke="#3c3c3c" stroke-width=".8"/><path d="M.5 4h15M.5 7.500h15M.5 11h15M4 .5v15M8 .5v15M12 .5v15" stroke="#555" stroke-width=".55"/><path d="M4.500 15l-2.700-5.500h5.400z" fill="#000"/><path d="M4.500 4h7v8" fill="none" stroke="#000" stroke-width=".8"/></g>
<g transform="translate(680.5 256)"><path d="M1 3.500h6v9H4v-4H1zM9 3.500h6v5H9z" fill="#e8e8e8" stroke="#3c3c3c" stroke-width=".8"/><path d="M9.500 6l4-2.300v4.600zM4 13l-2.300-4.500h4.600z" fill="#000"/></g>
<g transform="translate(703.5 256)"><path d="M1.500 1.500h13v14h-8v-6h-5z" fill="#f4f4f4" stroke="#3c3c3c" stroke-width=".8"/><path d="M6.500 9.500h8M6.500 11.500h8M6.500 13.500h8M6.500 1.500v8M10.500 1.500v8" stroke="#3c3c3c" stroke-width=".7"/><path d="M2 5.500L9 2.500v6z" fill="#000"/></g>
<g transform="translate(726.5 256)"><path d="M2.500 1.500h11v5h-2v9h-4v-9h-5z" fill="#f4f4f4" stroke="#3c3c3c" stroke-width=".8"/><path d="M7.500 6.500h4M6 1.500v5M9.500 1.500v5" stroke="#3c3c3c" stroke-width=".7"/><path d="M7.500 15.500l-3-6.500h6z" fill="#000"/></g>
<g transform="translate(750 256)"><path d="M8 8L15 5A7.500 7.500 0 1 0 15 11Z" fill="#f4f4f4" stroke="#3c3c3c" stroke-width=".9"/><path d="M8 8L14.5 11.8M8 8L11.8 14.5M8 8L8.0 15.5M8 8L4.3 14.5M8 8L1.5 11.8M8 8L0.5 8.0M8 8L1.5 4.2M8 8L4.2 1.5M8 8L8.0 0.5M8 8L11.8 1.5M8 8L14.5 4.2" stroke="#3c3c3c" stroke-width=".7"/><circle cx="8" cy="8" r="3.600" fill="none" stroke="#3c3c3c" stroke-width=".7"/><path d="M8 12.500l5-2v4z" fill="#000"/></g>
<g transform="translate(773 256)"><path d="M8 8L15 5A7.500 7.500 0 1 0 15 11Z" fill="#f4f4f4" stroke="#3c3c3c" stroke-width=".9"/><path d="M8 8L14.5 11.8M8 8L11.8 14.5M8 8L8.0 15.5M8 8L4.3 14.5M8 8L1.5 11.8M8 8L0.5 8.0M8 8L1.5 4.2M8 8L4.2 1.5M8 8L8.0 0.5M8 8L11.8 1.5M8 8L14.5 4.2" stroke="#3c3c3c" stroke-width=".7"/><circle cx="8" cy="8" r="3.600" fill="none" stroke="#3c3c3c" stroke-width=".7"/><path d="M8 8.500l4.500-2v4zM5 13.500l4.500-2v4z" fill="#000"/></g>
<g transform="translate(796 256)"><path d="M.5 4.500h10l5 8h-15z" fill="#e8e8e8" stroke="#4a4a4a" stroke-width=".9"/><path d="M3.5 4.500v8M6.5 4.500v8M9.5 4.500v8M.5 7h12M.5 10h12" stroke="#4a4a4a" stroke-width=".8" fill="none"/><path d="M14 8.500L9.500 6v5z" fill="#000"/></g>
<g transform="translate(819 256)"><path d="M.5 4.500h15v8h-10z" fill="#e8e8e8" stroke="#4a4a4a" stroke-width=".9"/><path d="M6.5 4.500v8M9.5 4.500v8M12.5 4.500v8M.5 7h12M.5 10h12" stroke="#4a4a4a" stroke-width=".8" fill="none"/><path d="M14 8.500L9.500 6v5z" fill="#000"/></g>
<path d="M849.0 256.0l1.600-1.600M849.0 260.0l1.600-1.600M849.0 264.0l1.600-1.600M849.0 268.0l1.600-1.600M849.0 272.0l1.600-1.600M849.0 276.0l1.600-1.600" stroke="#b2b2b2" stroke-width="1.500" fill="none"/>
<g transform="translate(860 256)"><rect x=".5" y="2" width="11" height="12" fill="#f6f6f6" stroke="#3c3c3c" stroke-width=".9"/><path d="M10 8l5.500-3v6z" fill="#000"/></g>
<g transform="translate(883 256)"><rect x="2.500" y="3.500" width="11" height="9" fill="#f6f6f6" stroke="#3c3c3c" stroke-width=".9"/><path d="M5.500 8L0 5v6zM10.500 8L16 5v6z" fill="#000"/></g>
<g transform="translate(906 256)"><rect x=".5" y="2" width="11" height="12" fill="#fff" stroke="#3c3c3c" stroke-width=".9"/><path d="M9.500 8l6-3v6z" fill="#000"/></g>
<g transform="translate(929 256)"><rect x="2.500" y="3.500" width="11" height="9" fill="#fff" stroke="#3c3c3c" stroke-width=".9"/><path d="M5 8L0 5.500v5zM11 8l5-2.500v5z" fill="#000"/></g>
<text x="911" y="267.5" font-size="9" font-weight="bold" text-anchor="middle" fill="#000">P</text>
<text x="937" y="267" font-size="7" font-weight="bold" text-anchor="middle" fill="#000">P</text>
<path d="M325.0 286.0l1.600-1.600M325.0 290.0l1.600-1.600M325.0 294.0l1.600-1.600M325.0 298.0l1.600-1.600M325.0 302.0l1.600-1.600M325.0 306.0l1.600-1.600" stroke="#b2b2b2" stroke-width="1.500" fill="none"/>
<g transform="translate(336 287)"><rect x=".5" y="4.500" width="15" height="8" fill="#f7b566" stroke="#9a6a3a" stroke-width=".9"/><path d="M3 8.500h10M3 6.500v4M13 6.500v4" stroke="#8a5a2a" stroke-width=".9"/></g>
<g transform="translate(359 287)"><path d="M4.500 15.500L3.500 12Q.5 9.500 1 6.500Q2 1 8 1Q14 1 15 6.500Q15.500 9.500 12.500 12L11.500 15.500Z" fill="#f9bd78" stroke="#cf8f4f" stroke-width=".9"/></g>
<g transform="translate(382 287)"><path d="M.5 4.500h15v8h-15z" fill="#fff" stroke="#3c3c3c" stroke-width=".9"/><path d="M1 8.500h11" stroke="#3c3c3c" stroke-width=".8"/><path d="M15 8.500L10 6v5z" fill="#000"/></g>
<g transform="translate(405 287)"><path d="M.5 4.500h10l5 8h-15z" fill="#fff" stroke="#3c3c3c" stroke-width=".9"/><path d="M1 8.500h11" stroke="#3c3c3c" stroke-width=".8"/><path d="M15 8.500L10 6v5z" fill="#000"/></g>
<g transform="translate(428 287)"><path d="M.5 4.500h15v8h-10z" fill="#fff" stroke="#3c3c3c" stroke-width=".9"/><path d="M1 8.500h11" stroke="#3c3c3c" stroke-width=".8"/><path d="M15 8.500L10 6v5z" fill="#000"/></g>
<g transform="translate(451 287)"><rect x=".5" y="4.500" width="15" height="8" fill="#e2e2e2" stroke="#cacaca" stroke-width=".8"/><path d="M1 6.500h14M1 8.500h14M1 10.500h14" stroke="#f6f6f6" stroke-width=".8" stroke-dasharray="1 1"/></g>
<g transform="translate(474 287)"><rect x=".5" y="2.500" width="15" height="11" fill="#fff" stroke="#6a6a6a" stroke-width=".9"/><path d="M.5 2.500l15 11M15.500 2.500l-15 11" stroke="#8a8a8a" stroke-width=".7"/></g>
<g transform="translate(497 287)"><rect x=".5" y="2.500" width="15" height="11" fill="#fff" stroke="#3a3a3a" stroke-width=".9"/><path d="M2 13.500L15.500 11V4.500L15.500 13.500Z" fill="#000"/><path d="M1 13.500h14.500V5L13 11z" fill="#000"/></g>
<path d="M527.5 286.0l1.600-1.600M527.5 290.0l1.600-1.600M527.5 294.0l1.600-1.600M527.5 298.0l1.600-1.600M527.5 302.0l1.600-1.600M527.5 306.0l1.600-1.600" stroke="#b2b2b2" stroke-width="1.500" fill="none"/>
<g transform="translate(538 287)"><circle cx="8" cy="8" r="7.200" fill="#fff" stroke="#222" stroke-width="1.200" stroke-dasharray="2 1"/><path d="M8 8L15.0 8.0M8 8L14.6 10.4M8 8L13.4 12.5M8 8L11.5 14.1M8 8L9.2 14.9M8 8L6.8 14.9M8 8L4.5 14.1M8 8L2.6 12.5M8 8L1.4 10.4M8 8L1.0 8.0M8 8L1.4 5.6M8 8L2.6 3.5M8 8L4.5 1.9M8 8L6.8 1.1M8 8L9.2 1.1M8 8L11.5 1.9M8 8L13.4 3.5M8 8L14.6 5.6" stroke="#222" stroke-width=".8"/><circle cx="8" cy="8" r="2" fill="#fff" stroke="#222" stroke-width=".7"/></g>
<g transform="translate(561 287)"><rect x=".5" y="5" width="15" height="6.500" rx="2.500" fill="#f4f4f4" stroke="#8a8a8a" stroke-width=".9"/><path d="M4 5.500v5.500M10.500 5.500v5.500M4 7h6.500M4 9.500h6.500M12.500 6v4.500" stroke="#9a9a9a" stroke-width=".7"/></g>
<path d="M591.5 286.0l1.600-1.600M591.5 290.0l1.600-1.600M591.5 294.0l1.600-1.600M591.5 298.0l1.600-1.600M591.5 302.0l1.600-1.600M591.5 306.0l1.600-1.600" stroke="#b2b2b2" stroke-width="1.500" fill="none"/>
<g transform="translate(602 287)"><rect x="4.500" y=".5" width="7" height="15" fill="#fff" stroke="#111" stroke-width="1.200"/><path d="M5 3.500h6" stroke="#111" stroke-width=".9"/></g>
<g transform="translate(625 287)"><rect x=".8" y=".8" width="14.400" height="14.400" fill="#fff" stroke="#111" stroke-width="1.500"/><path d="M1 4.500h3l1.500-2h5l1.500 2h3" fill="none" stroke="#111" stroke-width="1.300"/></g>
<g transform="translate(648 287)"><rect x=".5" y=".5" width="15" height="15" fill="#fff" stroke="#3a3a3a" stroke-width="1"/></g>
<g transform="translate(671 287)"><rect x=".5" y=".5" width="15" height="15" fill="#f0f0f0" stroke="#4a4a4a" stroke-width=".9"/><circle cx="4.500" cy="4.500" r="2.700" fill="#fff" stroke="#3a3a3a" stroke-width=".8"/><circle cx="11.500" cy="4.500" r="2.700" fill="#fff" stroke="#3a3a3a" stroke-width=".8"/><circle cx="4.500" cy="11.500" r="2.700" fill="#fff" stroke="#3a3a3a" stroke-width=".8"/><circle cx="11.500" cy="11.500" r="2.700" fill="#fff" stroke="#3a3a3a" stroke-width=".8"/></g>
<g transform="translate(694 287)"><rect width="16" height="16" fill="#fff"/><rect x=".8" y="3.500" width="14.400" height="9.500" fill="#fff" stroke="#222" stroke-width="1.300"/><path d="M8 3.500v9.500M1 5.500h14" stroke="#222" stroke-width="1"/></g>
<g transform="translate(717 287)"><rect x=".5" y=".5" width="15" height="15" fill="#fff" stroke="#3a3a3a" stroke-width="1"/><path d="M8 6v4M6 8h4M6.500 6.500l3 3M9.500 6.500l-3 3" stroke="#222" stroke-width=".8"/></g>
<g transform="translate(740 287)"><rect x="4" y="4" width="8" height="8" fill="#fff" stroke="#111" stroke-width="1.200"/><path d="M6.500 .8h3v2.400h-3zM6.500 12.800h3v2.400h-3zM.8 6.500h2.400v3H.8zM12.800 6.500h2.400v3h-2.400z" fill="#fff" stroke="#111" stroke-width="1"/></g>
<g transform="translate(763 287)"><rect x=".5" y=".5" width="15" height="15" fill="#fff" stroke="#3a3a3a" stroke-width="1"/><path d="M3 15.500V3h10v12.500" fill="none" stroke="#3a3a3a" stroke-width="1"/></g>
<g transform="translate(786 287)"><rect x=".5" y="3.500" width="15" height="9" fill="#fff" stroke="#4a4a4a" stroke-width="1"/><path d="M8 5.500v7M.5 5.500h15" stroke="#4a4a4a" stroke-width=".9"/></g>
<g transform="translate(809 287)"><rect x=".5" y="4.500" width="15" height="7" fill="#fff" stroke="#4a4a4a" stroke-width="1"/><path d="M5.500 4.500v7M10.500 4.500v7M.5 6h15" stroke="#4a4a4a" stroke-width=".9"/></g>
<g transform="translate(832 287)"><rect x=".5" y="7.500" width="15" height="8" fill="#fff" stroke="#3a3a3a" stroke-width="1"/><rect x="5.500" y="1.500" width="5" height="6" fill="#fff" stroke="#3a3a3a" stroke-width="1"/><path d="M6 3h4" stroke="#3a3a3a"/></g>
<g transform="translate(855 287)"><rect x=".5" y="4.500" width="15" height="7" rx="1" fill="#fff" stroke="#111" stroke-width="1.300"/></g>
<g transform="translate(878 287)"><rect x=".8" y=".8" width="14.400" height="14.400" rx="1" fill="#fff" stroke="#222" stroke-width="1.400"/></g>
<g transform="translate(901 287)"><path d="M1 3.500h14V8q0 6.500-7 6.500T1 8z" fill="#fff" stroke="#3a3a3a" stroke-width="1"/><path d="M1 5.500h14" stroke="#3a3a3a" stroke-width=".8"/></g>
<g transform="translate(924 287)"><rect x="2.500" y=".8" width="11" height="4" rx="1" fill="#fff" stroke="#3a3a3a" stroke-width="1"/><path d="M3.500 5v6q0 4.500 2 4.500h5q2 0 2-4.500v-6" fill="#fff" stroke="#3a3a3a" stroke-width="1"/><circle cx="8" cy="2.800" r=".8" fill="#3a3a3a"/></g>
</svg>
<div class="t" style="left:706px;top:198px;letter-spacing:-.1px">Achtergrond sluiten</div>
<!--/TB-->
<!-- canvas -->
<div id="canvas" style="left:316px;top:313px;width:773px;height:678px;background:#fff;overflow:hidden"><svg style="left:0;top:0" width="773" height="678" viewBox="316 313 773 678" font-family="Liberation Sans,sans-serif">
<path d="M464.3 359.5a1.900 1.900 0 1 0 3.800 0a1.900 1.900 0 1 0-3.800 0M543.1 359.5a1.900 1.900 0 1 0 3.800 0a1.900 1.900 0 1 0-3.800 0M621.6 359.5a1.900 1.900 0 1 0 3.800 0a1.900 1.900 0 1 0-3.800 0M700.1 359.5a1.900 1.900 0 1 0 3.800 0a1.900 1.900 0 1 0-3.800 0M778.9 359.5a1.900 1.900 0 1 0 3.800 0a1.900 1.900 0 1 0-3.800 0M857.6 359.5a1.900 1.900 0 1 0 3.800 0a1.900 1.900 0 1 0-3.800 0M936.1 359.5a1.900 1.900 0 1 0 3.800 0a1.900 1.900 0 1 0-3.800 0M1014.7 359.5a1.900 1.900 0 1 0 3.800 0a1.900 1.900 0 1 0-3.800 0M385.8 516.5a1.900 1.900 0 1 0 3.800 0a1.900 1.900 0 1 0-3.800 0M464.3 516.5a1.900 1.900 0 1 0 3.800 0a1.900 1.900 0 1 0-3.800 0M543.1 516.5a1.900 1.900 0 1 0 3.800 0a1.900 1.900 0 1 0-3.800 0M621.6 516.5a1.900 1.900 0 1 0 3.800 0a1.900 1.900 0 1 0-3.800 0M700.1 516.5a1.900 1.900 0 1 0 3.800 0a1.900 1.900 0 1 0-3.800 0M778.9 516.5a1.900 1.900 0 1 0 3.800 0a1.900 1.900 0 1 0-3.800 0M857.6 516.5a1.900 1.900 0 1 0 3.800 0a1.900 1.900 0 1 0-3.800 0M936.1 516.5a1.900 1.900 0 1 0 3.800 0a1.900 1.900 0 1 0-3.800 0M1014.7 516.5a1.900 1.900 0 1 0 3.800 0a1.900 1.900 0 1 0-3.800 0M385.8 591.0a1.900 1.900 0 1 0 3.800 0a1.900 1.900 0 1 0-3.800 0M464.3 591.0a1.900 1.900 0 1 0 3.800 0a1.900 1.900 0 1 0-3.800 0M543.1 591.0a1.900 1.900 0 1 0 3.800 0a1.900 1.900 0 1 0-3.800 0M621.6 591.0a1.900 1.900 0 1 0 3.800 0a1.900 1.900 0 1 0-3.800 0M700.1 591.0a1.900 1.900 0 1 0 3.800 0a1.900 1.900 0 1 0-3.800 0M778.9 591.0a1.900 1.900 0 1 0 3.800 0a1.900 1.900 0 1 0-3.800 0M857.6 591.0a1.900 1.900 0 1 0 3.800 0a1.900 1.900 0 1 0-3.800 0M936.1 591.0a1.900 1.900 0 1 0 3.800 0a1.900 1.900 0 1 0-3.800 0M1014.7 591.0a1.900 1.900 0 1 0 3.800 0a1.900 1.900 0 1 0-3.800 0M385.8 670.0a1.900 1.900 0 1 0 3.800 0a1.900 1.900 0 1 0-3.800 0M464.3 670.0a1.900 1.900 0 1 0 3.800 0a1.900 1.900 0 1 0-3.800 0M543.1 670.0a1.900 1.900 0 1 0 3.800 0a1.900 1.900 0 1 0-3.800 0M621.6 670.0a1.900 1.900 0 1 0 3.800 0a1.900 1.900 0 1 0-3.800 0M700.1 670.0a1.900 1.900 0 1 0 3.800 0a1.900 1.900 0 1 0-3.800 0M778.9 670.0a1.900 1.900 0 1 0 3.800 0a1.900 1.900 0 1 0-3.800 0M857.6 670.0a1.900 1.900 0 1 0 3.800 0a1.900 1.900 0 1 0-3.800 0M936.1 670.0a1.900 1.900 0 1 0 3.800 0a1.900 1.900 0 1 0-3.800 0M1014.7 670.0a1.900 1.900 0 1 0 3.800 0a1.900 1.900 0 1 0-3.800 0M385.8 748.5a1.900 1.900 0 1 0 3.800 0a1.900 1.900 0 1 0-3.800 0M464.3 748.5a1.900 1.900 0 1 0 3.800 0a1.900 1.900 0 1 0-3.800 0M543.1 748.5a1.900 1.900 0 1 0 3.800 0a1.900 1.900 0 1 0-3.800 0M621.6 748.5a1.900 1.900 0 1 0 3.800 0a1.900 1.900 0 1 0-3.800 0M700.1 748.5a1.900 1.900 0 1 0 3.800 0a1.900 1.900 0 1 0-3.800 0M778.9 748.5a1.900 1.900 0 1 0 3.800 0a1.900 1.900 0 1 0-3.800 0M857.6 748.5a1.900 1.900 0 1 0 3.800 0a1.900 1.900 0 1 0-3.800 0M936.1 748.5a1.900 1.900 0 1 0 3.800 0a1.900 1.900 0 1 0-3.800 0M1014.7 748.5a1.900 1.900 0 1 0 3.800 0a1.900 1.900 0 1 0-3.800 0M385.8 827.5a1.900 1.900 0 1 0 3.800 0a1.900 1.900 0 1 0-3.800 0M464.3 827.5a1.900 1.900 0 1 0 3.800 0a1.900 1.900 0 1 0-3.800 0M543.1 827.5a1.900 1.900 0 1 0 3.800 0a1.900 1.900 0 1 0-3.800 0M621.6 827.5a1.900 1.900 0 1 0 3.800 0a1.900 1.900 0 1 0-3.800 0M700.1 827.5a1.900 1.900 0 1 0 3.800 0a1.900 1.900 0 1 0-3.800 0M778.9 827.5a1.900 1.900 0 1 0 3.800 0a1.900 1.900 0 1 0-3.800 0M857.6 827.5a1.900 1.900 0 1 0 3.800 0a1.900 1.900 0 1 0-3.800 0M936.1 827.5a1.900 1.900 0 1 0 3.800 0a1.900 1.900 0 1 0-3.800 0M1014.7 827.5a1.900 1.900 0 1 0 3.800 0a1.900 1.900 0 1 0-3.800 0M385.8 906.0a1.900 1.900 0 1 0 3.800 0a1.900 1.900 0 1 0-3.800 0M464.3 906.0a1.900 1.900 0 1 0 3.800 0a1.900 1.900 0 1 0-3.800 0M543.1 906.0a1.900 1.900 0 1 0 3.800 0a1.900 1.900 0 1 0-3.800 0M621.6 906.0a1.900 1.900 0 1 0 3.800 0a1.900 1.900 0 1 0-3.800 0M700.1 906.0a1.900 1.900 0 1 0 3.800 0a1.900 1.900 0 1 0-3.800 0M778.9 906.0a1.900 1.900 0 1 0 3.800 0a1.900 1.900 0 1 0-3.800 0M857.6 906.0a1.900 1.900 0 1 0 3.800 0a1.900 1.900 0 1 0-3.800 0M936.1 906.0a1.900 1.900 0 1 0 3.800 0a1.900 1.900 0 1 0-3.800 0M1014.7 906.0a1.900 1.900 0 1 0 3.800 0a1.900 1.900 0 1 0-3.800 0M385.8 984.5a1.900 1.900 0 1 0 3.800 0a1.900 1.900 0 1 0-3.800 0M464.3 984.5a1.900 1.900 0 1 0 3.800 0a1.900 1.900 0 1 0-3.800 0M543.1 984.5a1.900 1.900 0 1 0 3.800 0a1.900 1.900 0 1 0-3.800 0M621.6 984.5a1.900 1.900 0 1 0 3.800 0a1.900 1.900 0 1 0-3.800 0M700.1 984.5a1.900 1.900 0 1 0 3.800 0a1.900 1.900 0 1 0-3.800 0M778.9 984.5a1.900 1.900 0 1 0 3.800 0a1.900 1.900 0 1 0-3.800 0M857.6 984.5a1.900 1.900 0 1 0 3.800 0a1.900 1.900 0 1 0-3.800 0M936.1 984.5a1.900 1.900 0 1 0 3.800 0a1.900 1.900 0 1 0-3.800 0M1014.7 984.5a1.900 1.900 0 1 0 3.800 0a1.900 1.900 0 1 0-3.800 0" fill="#111"/>
<text x="0" y="0" font-size="62" transform="translate(383.700 801.500)" text-anchor="end" fill="#0a0a0a" stroke="#fff" stroke-width="1.300">nce</text>
<text x="0" y="0" font-size="60" transform="translate(639 824.500) rotate(-90) scale(.928 1)" fill="#0a0a0a" stroke="#fff" stroke-width="1.200">16 Stg.</text>
<text x="0" y="0" font-size="57" transform="translate(704.500 824.500) rotate(-90) scale(.985 1)" fill="#0a0a0a" stroke="#fff" stroke-width="1.200">17.5/27.7</text>
<g fill="#bdbdbd"><rect x="886" y="719.500" width="50" height="8.500"/><rect x="928.500" y="719.500" width="7.500" height="108"/><rect x="934" y="770.500" width="15" height="7"/><rect x="886" y="823" width="70" height="7.500"/><rect x="949" y="823" width="7.500" height="144"/><rect x="886" y="958" width="70" height="9"/><rect x="924" y="830" width="9" height="128"/><rect x="956" y="857" width="4" height="7"/><rect x="956" y="924" width="4" height="12"/><rect x="928" y="966" width="8" height="25"/></g>
<path d="M886 836L946 955" stroke="#bdbdbd" stroke-width="1.800"/>
<rect x="316" y="424.500" width="729" height="22.500" fill="#05070c"/>
<path d="M316 428.500H1045" stroke="#9a9a9a" stroke-width="1" stroke-dasharray="26 5"/>
<rect x="1023" y="419.500" width="66" height="9" fill="#05070c"/><rect x="1040" y="444.500" width="49" height="8" fill="#05070c"/>
<path d="M1029 445Q1051 471 1082 538" fill="none" stroke="#05070c" stroke-width="8.500"/>
<path d="M1045.500 452V541.500L1089 529" fill="none" stroke="#05070c" stroke-width="1"/>
<path d="M1070 534l8-4M1075 549l9-5M1086 525v26" fill="none" stroke="#05070c" stroke-width="5.500"/>
<path d="M472.500 447V574Q472.500 579.500 478 579.500H726V570.500H484.500V447Z" fill="#05070c"/>
<rect x="513.1" y="447" width="7" height="124" fill="#05070c"/>
<rect x="547.6" y="447" width="7" height="124" fill="#05070c"/>
<rect x="581.2" y="447" width="5.5" height="124" fill="#05070c"/>
<rect x="616.1" y="447" width="4.5" height="124" fill="#05070c"/>
<rect x="621.1" y="447" width="4.5" height="124" fill="#05070c"/>
<rect x="649.2" y="447" width="7" height="124" fill="#05070c"/>
<rect x="685.2" y="447" width="6.5" height="124" fill="#05070c"/>
<rect x="724.8" y="447" width="3.5" height="124" fill="#05070c"/>
<rect x="732.0" y="447" width="4.6" height="124" fill="#05070c"/>
<path d="M495.5 447V571M540.6 447V571M563.4 447V571M590 447V571M608.8 447V571M630.2 447V571M676.2 447V571M698.7 447V571M719 447V571" stroke="#05070c" stroke-width="1.100"/>
<path d="M540 509.200H719" stroke="#05070c" stroke-width="1.100"/>
<path d="M481.500 508.600L540.600 480.800V538Z" fill="#000"/>
<path d="M481.500 581v6.500H488" fill="none" stroke="#1010ee" stroke-width="3.200"/>
<path d="M499 587.500H716" stroke="#1010ee" stroke-width="3.400" stroke-dasharray="12 11.700"/>

<rect x="716.500" y="570" width="11.300" height="248" fill="#05070c"/>

<rect x="719" y="819.500" width="141" height="3.600" fill="#05070c"/>
<rect x="727" y="569.8" width="123" height="4.6" fill="#05070c"/>
<rect x="727" y="577" width="123" height="3" fill="#05070c"/>
<rect x="727" y="605" width="123" height="4.6" fill="#05070c"/>
<rect x="727" y="613.6" width="123" height="4.6" fill="#05070c"/>
<rect x="727" y="640" width="123" height="7.4" fill="#05070c"/>
<rect x="727" y="676.7" width="123" height="7.4" fill="#05070c"/>
<rect x="727" y="710.5" width="123" height="7.4" fill="#05070c"/>
<rect x="727" y="747" width="123" height="7.4" fill="#05070c"/>
<rect x="727" y="777.8" width="123" height="4.4" fill="#05070c"/>
<rect x="727" y="785" width="123" height="4.6" fill="#05070c"/>
<path d="M727 596.300H850M727 664H850M727 687.800H850M727 733H850M727 776.500H850M727 801.800H850" stroke="#05070c" stroke-width="1.100"/>
<path d="M791.700 640V822" stroke="#05070c" stroke-width="1.100"/>
<path d="M791.700 574L823.500 640.800H759.500Z" fill="#000"/>
<rect x="851" y="446" width="26.800" height="376" fill="#05070c"/><rect x="849.300" y="574" width="3" height="244" fill="#05070c"/><rect x="861" y="820" width="16.800" height="171" fill="#05070c"/>
<path d="M861.500 452V820" stroke="#0e0e7c" stroke-width="1" stroke-dasharray="14 4"/>
<rect x="882.500" y="447" width="3.300" height="544" fill="#05070c"/>
<path d="M877 473.5h6v3h-6zM877 504.9h6v3h-6zM877 536.4h6v3h-6zM877 567.9h6v3h-6zM877 599.3h6v3h-6zM877 630.7h6v3h-6zM877 662.2h6v3h-6zM877 693.6h6v3h-6zM877 725.1h6v3h-6zM877 756.5h6v3h-6zM877 788.0h6v3h-6zM877 819.5h6v3h-6zM877 850.9h6v3h-6zM877 882.3h6v3h-6zM877 913.8h6v3h-6zM877 945.3h6v3h-6zM877 976.7h6v3h-6z" fill="#05070c"/>
<g><circle cx="376" cy="372.8" r="30.500" fill="none" stroke="#333" stroke-width=".8"/><circle cx="376" cy="372.8" r="25.300" fill="none" stroke="#333" stroke-width=".8"/><path d="M376 352.8L379 369.8L396 372.8L379 375.8L376 392.8L373 375.8L356 372.8L373 369.8Z" transform="rotate(45 376 372.8)" fill="#000"/><path d="M376 331.8L381 367.8L417 372.8L381 377.8L376 413.8L371 377.8L335 372.8L371 367.8Z" fill="#000"/><circle cx="376" cy="372.8" r="5" fill="#fff"/><text x="375.5" y="329" font-size="9.500" text-anchor="middle" fill="#000">N</text></g>
<g><rect x="336" y="970" width="107" height="8" fill="#fff" stroke="#d4d4d4" stroke-width=".8"/><path d="M336 970h21.300v8H336zM378.700 970h21.300v8h-21.300zM421.300 970H443v8h-21.700z" fill="#808080"/><text x="389" y="965.500" font-size="10.200" text-anchor="middle" font-family="DejaVu Sans,sans-serif" fill="#000">1 m</text></g>
</svg></div>
<!-- scroll thumbs -->
<div style="left:1097px;top:695px;width:6px;height:148px;background:#878787"></div>
<div style="left:692px;top:998px;width:142px;height:6px;background:#878787"></div>
<!-- bottom tabs -->
<svg style="left:0;top:1000px" width="1366" height="40" viewBox="0 1000 1366 40">
 <defs><linearGradient id="gtb" x1="0" y1="0" x2="0" y2="1"><stop offset="0" stop-color="#ebebeb"/><stop offset="1" stop-color="#fcfcfc"/></linearGradient></defs>
 <path d="M421.500 1013.500H528.500V1030Q528.500 1033.500 525 1033.500H425Q421.500 1033.500 421.500 1030Z" fill="url(#gtb)" stroke="#9a9a9a"/>
 <path d="M528.500 1013.500H601.500V1030Q601.500 1033.500 598 1033.500H532Q528.500 1033.500 528.500 1030Z" fill="url(#gtb)" stroke="#9a9a9a"/>
 <path d="M601.500 1013.500H664.500V1030Q664.500 1033.500 661 1033.500H605Q601.500 1033.500 601.500 1030Z" fill="url(#gtb)" stroke="#9a9a9a"/>
 <path d="M664.500 1013.500H750.500V1030Q750.500 1033.500 747 1033.500H668Q664.500 1033.500 664.500 1030Z" fill="url(#gtb)" stroke="#9a9a9a"/>
 <path d="M313.500 1013.500H317Q319.500 1013.500 321.500 1015.500L336.500 1031Q339 1033.500 342 1033.500H418Q421.500 1033.500 421.500 1030V1013.500H1112.500" fill="none" stroke="#8c8c8c"/>
</svg>
<svg style="left:0;top:1010px" width="1366" height="30" viewBox="0 1010 1366 30" fill="none">
<!-- tekening icon -->
<rect x="342.500" y="1016.500" width="11" height="14" rx="1" fill="#fdfdfd" stroke="#c4c4c4"/><path d="M345 1029q1-5 3-7q2 2 0 4q3 1 2 3z" fill="#6aa8e8"/><path d="M346 1029h5" stroke="#2a5aa8" stroke-width="1.500"/><path d="M349.500 1026.500l7-8.500l1.800 1.600l-7 8.400z" fill="#f3cd5a" stroke="#b8922a" stroke-width=".7"/>
<!-- eigenschappen icon -->
<rect x="432.500" y="1016.500" width="12" height="14" fill="#fdfdfd" stroke="#bdbdbd"/><path d="M431 1016v15" stroke="#c8642a" stroke-width="2" stroke-dasharray="1.200 .8"/><path d="M436 1020.500h6M436 1023.500h6" stroke="#5a8ae0" stroke-width="1.500"/><path d="M444.500 1026.500l-4 4" stroke="#bdbdbd"/>
<!-- relaties icon -->
<rect x="537.500" y="1018.500" width="13" height="11" fill="#fdfdfd" stroke="#9a7a4a"/><rect x="538" y="1019" width="12" height="3" fill="#f39a2a"/><path d="M538 1025.500h12M542 1022v7M546.500 1022v7" stroke="#b8a88a" stroke-width=".8"/><ellipse cx="542" cy="1029.500" rx="2.600" ry="1.800" fill="#dfe8fa" stroke="#2a4a9a" stroke-width="1.200"/><ellipse cx="548" cy="1029.500" rx="2.600" ry="1.800" fill="#dfe8fa" stroke="#2a4a9a" stroke-width="1.200"/><path d="M543.500 1029.500h3" stroke="#2a4a9a" stroke-width="1.400"/>
<!-- media icon -->
<rect x="610.500" y="1017.500" width="13" height="13" rx="1" fill="#e8f0fc" stroke="#4a7ad0" stroke-width="1.200"/><rect x="612.500" y="1019.500" width="9" height="9" fill="#8ab8ea"/><path d="M612.500 1025h9v3.500h-9z" fill="#5a98d8"/>
<!-- rapporten puzzle -->
<g transform="translate(673.5 1016.5)"><path d="M.5 3.500h4v-3h4v3h3v3h3v4h-3v4h-4v-2.500h-2v2.500h-5v-4.500h2v-3h-2z" fill="#68bc5e" stroke="#48a03c" stroke-width="1" stroke-linejoin="round"/><path d="M2 5h8.500v8M2 5v1.500" fill="none" stroke="#9ad892" stroke-width=".8"/></g>
</svg>
<div class="t" style="left:362px;top:1017px;font-weight:bold;font-size:11.500px;letter-spacing:.25px">Tekening</div>
<div class="t" style="left:448px;top:1017px;letter-spacing:-.3px">Eigenschappen</div>
<div class="t" style="left:555px;top:1017px;letter-spacing:-.2px">Relaties</div>
<div class="t" style="left:628px;top:1017px;letter-spacing:-.2px">Media</div>
<div class="t" style="left:692px;top:1017px;letter-spacing:-.2px">Rapporten</div>
</div>

<!-- RIGHT PANEL -->
<div id="right">
<svg style="left:0;top:0" width="1366" height="160" viewBox="0 0 1366 160">
 <path d="M1120 152.500H1125.500C1129 152.500 1130.500 151 1133 148.500L1146 136.500C1149 133.500 1150.500 132.500 1154 132.500H1228q3.500 0 3.500 3.500V152.500H1314" fill="none" stroke="#8c8c8c"/>
 <g transform="translate(1154.5 134.5)"><path d="M.5 3.500h4v-3h4v3h3v3h3v4h-3v4h-4v-2.500h-2v2.500h-5v-4.500h2v-3h-2z" fill="#68bc5e" stroke="#48a03c" stroke-width="1" stroke-linejoin="round"/><path d="M2 5h8.500v8M2 5v1.500" fill="none" stroke="#9ad892" stroke-width=".8"/></g>
</svg>
<div class="t" style="left:1173px;top:135px;letter-spacing:-.22px;font-size:11.200px">Bibliotheek</div>
<div class="hdr" style="left:1123px;top:155px;width:188px"></div>
<div class="t" style="left:1128.500px;top:157px;letter-spacing:-.25px">Bibliotheek</div>
<svg style="left:1223px;top:155px" width="80" height="18" viewBox="0 0 80 18" fill="none" stroke="#000" stroke-width="1"><path d="M5.500 5.500h9v8h-9zM5 6h10" /><path d="M25.500 8.500h6v5h-6zM28.500 8V5.500h6v5H32M28 6h7M25 9h7"/><path d="M48.500 5.500h4v4.500h-4zM47 10.500h7M50.500 10.500V15M52 5.500v5"/><path d="M66.500 5.500l7 7M73.500 5.500l-7 7"/></svg>
<div style="left:1123px;top:174px;width:187px;height:250px;border:1px solid #8a8e94;border-top-color:#6c6e72;border-left-color:#6c6e72;background:#fff;overflow:hidden">
 <div style="left:0;top:0;width:1px;height:250px;background:#66686c"></div><div style="left:0;top:0;width:188px;height:1px;background:#66686c"></div>
 <div style="left:165px;top:1px;width:20px;height:248px;background:#f0f0f0"></div>
 <div style="left:172px;top:22px;width:6px;height:166px;background:#878787"></div>
 <div class="t" style="left:1.500px;top:0.5px;line-height:16px">Afsluiter</div><div class="t" style="left:1.500px;top:16.5px;line-height:16px">Automatische blusinstallatie</div><div class="t" style="left:1.500px;top:32.5px;line-height:16px">Bestemming van lokalen</div><div class="t" style="left:1.500px;top:48.5px;line-height:16px">Blusmiddel</div><div class="t" style="left:1.500px;top:64.5px;line-height:16px">Bluswatervoorziening</div><div class="t" style="left:1.500px;top:80.5px;line-height:16px">Compartimentering</div><div class="t" style="left:1.500px;top:96.5px;line-height:16px">Eerste hulp</div><div class="t" style="left:1.500px;top:112.5px;line-height:16px">Evacuatie</div><div class="t" style="left:1.500px;top:128.5px;line-height:16px">Evacuatieplan</div><div class="t" style="left:1.500px;top:144.5px;line-height:16px">Gevaarlijke stof</div><div class="t" style="left:1.500px;top:160.5px;line-height:16px">Gevaren</div><div class="t" style="left:1.500px;top:176.5px;line-height:16px">Interventie</div><div class="t" style="left:1.500px;top:192.5px;line-height:16px">Locaties</div><div class="t" style="left:1.500px;top:208.5px;line-height:16px">Melding &amp; detectie</div><div class="t" style="left:1.500px;top:224.5px;line-height:16px">Noodverlichting</div><div class="t" style="left:1.500px;top:240.5px;line-height:16px">Plaatsbepaal</div>
</div>
<div style="left:1123px;top:428px;width:187px;height:607px;border:1px solid #8a8e94;border-top-color:#6c6e72;border-left-color:#6c6e72;background:#fff">
 <div style="left:0;top:0;width:1px;height:605px;background:#66686c"></div><div style="left:0;top:0;width:186px;height:1px;background:#66686c"></div>
</div>
</div>

<div style="left:303px;top:153px;width:3px;height:886px;background:#f5f5f5"></div>
<div style="left:1120px;top:153px;width:3px;height:886px;background:#f5f5f5"></div>
<div style="left:1311px;top:153px;width:4px;height:886px;background:#f5f5f5"></div>
<div style="left:51px;top:153px;width:3px;height:886px;background:#f5f5f5"></div>
<div style="left:1123px;top:425.500px;width:188px;height:2px;background:#f0f0f0"></div>
<!-- STATUS BAR -->
<div id="status" style="left:51px;top:1040px;width:1264px;height:26px;background:linear-gradient(#f6f6f6 0,#e2e2e2 1px,#a6a6a6 2px,#a6a6a6 2.500px,#f0f0f0 3px)"></div>
<svg style="left:0;top:1040px" width="1366" height="30" viewBox="0 1040 1366 30">
 <g stroke="#a0a0a0"><path d="M121.500 1047V1063M360.500 1047V1063M496.500 1047V1063M632.500 1047V1063M768.500 1047V1063M904.500 1047V1063M1199.500 1047V1063"/></g>
 <!-- pencil -->
 <path d="M58 1061l1.500-4.500l8.500-8.500l3 3l-8.500 8.500z" fill="#f3c04a" stroke="#a8781a" stroke-width=".9"/><path d="M58 1061l1.500-4.500l3 3z" fill="#f3e2c0" stroke="#8a6a3a" stroke-width=".6"/><path d="M66.500 1049.500l3 3" stroke="#d98a8a" stroke-width="1.400"/>
 <!-- antenna -->
 <g fill="none" stroke="#8d8d8d" stroke-width="1.500"><path d="M914 1056a6.500 6.500 0 1 1 10.500 0"/><path d="M916.500 1054.500a3.300 3.300 0 1 1 5.500 0"/><path d="M919.250 1053v3l-4 6.500M919.250 1056l4 6.500M916.800 1060.500h5" stroke-width="1.200"/></g>
 <rect x="937.500" y="1049.500" width="257" height="10" fill="#e6e6e6" stroke="#bcbcbc"/>
 <!-- clock -->
 <circle cx="1213.500" cy="1054.500" r="6.300" fill="#f5f9ff" stroke="#c8a45a" stroke-width="1.600"/><circle cx="1213.500" cy="1054.500" r="4.600" fill="none" stroke="#9ab4d8" stroke-width=".8"/><path d="M1213.500 1051v3.500h3" fill="none" stroke="#3a5a9a" stroke-width="1.100"/>
</svg>
<div class="t" style="left:75px;top:1048px">wim</div>
<div class="t" style="left:503px;top:1048px;letter-spacing:-.1px">x: 17,28 m</div>
<div class="t" style="left:639px;top:1048px;letter-spacing:-.1px">y: -16,00 m</div>
<div class="t" style="left:774px;top:1048px">l:</div>
<div class="t" style="left:1226.500px;top:1048px;letter-spacing:.05px">17:39:42</div>

</div></div>
</body>
</html>
